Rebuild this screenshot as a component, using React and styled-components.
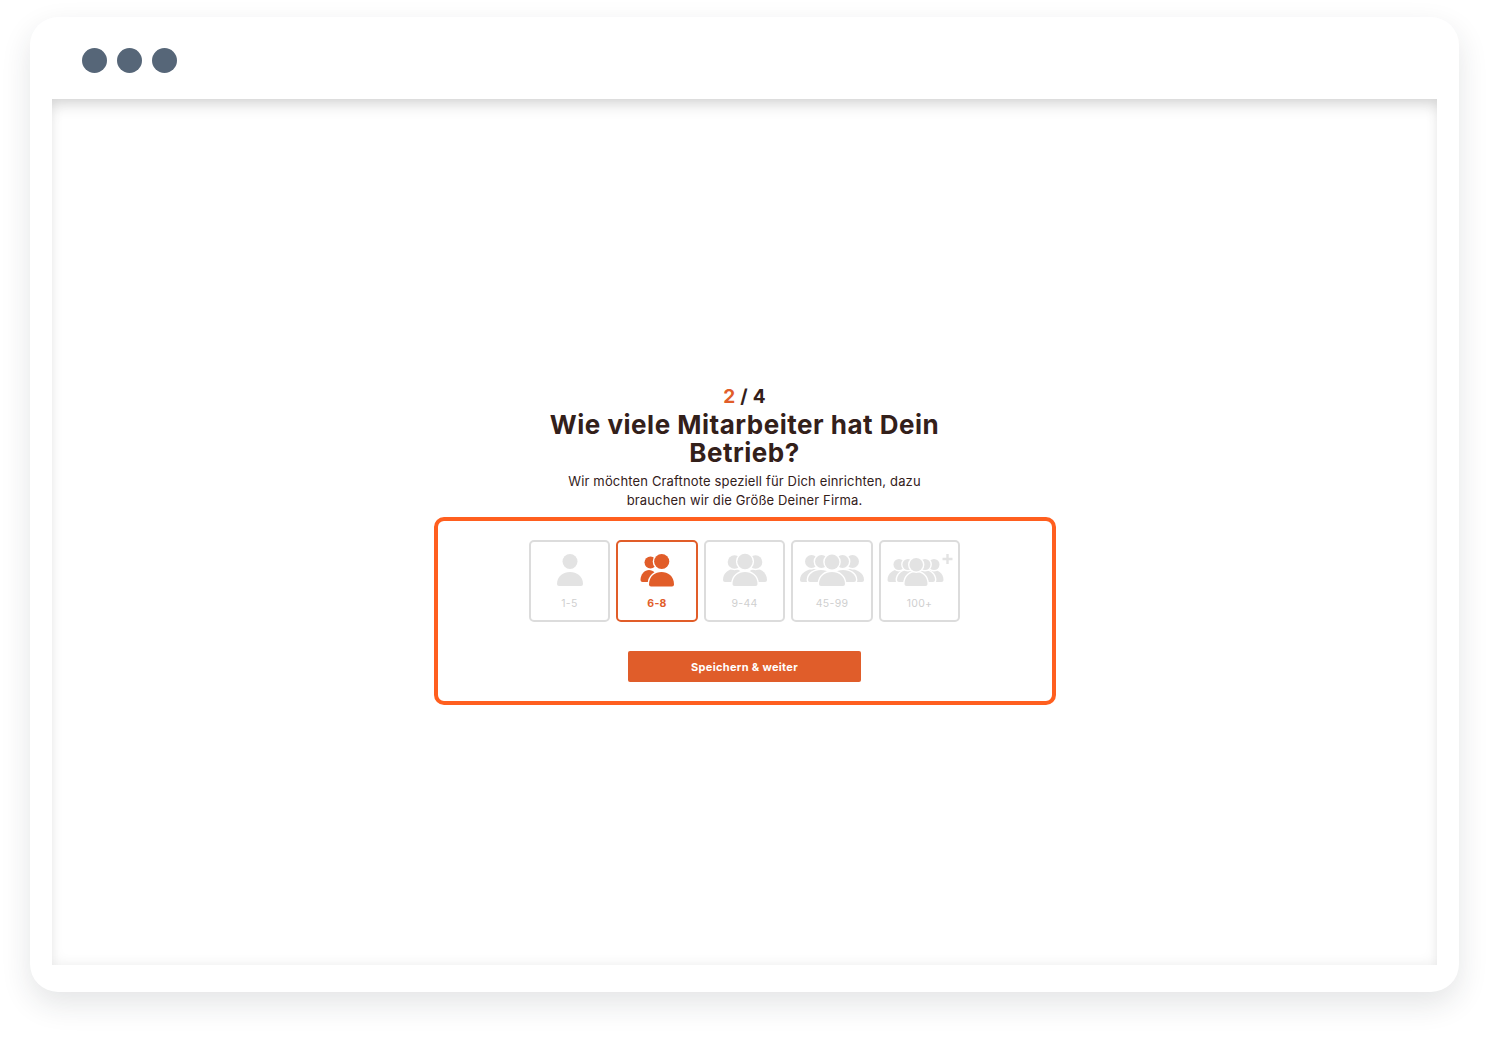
import React from 'react'
import styled, { createGlobalStyle } from 'styled-components'

const Global = createGlobalStyle`
  html, body {
    margin: 0;
    padding: 0;
    background: #fff;
  }
  body {
    font-family: "Inter", "Open Sans", "Liberation Sans", sans-serif;
    overflow: hidden;
  }
`

const Page = styled.div`
  width: 1489px;
  height: 1038px;
  padding: 17px 30px 0;
  box-sizing: border-box;
`

const Window = styled.div`
  width: 1429px;
  height: 975px;
  background: #fff;
  border-radius: 28px;
  box-shadow: 0 12px 30px rgba(30, 40, 50, 0.12);
  padding: 0 22px;
  box-sizing: border-box;
`

const TitleBar = styled.div`
  height: 82px;
  display: flex;
  gap: 10px;
  padding: 31px 0 0 30px;
  box-sizing: border-box;
`

const Dot = styled.span`
  width: 25px;
  height: 25px;
  border-radius: 50%;
  background: #566678;
`

const Screen = styled.div`
  height: 866px;
  box-sizing: border-box;
  padding-top: 288px;
  display: flex;
  flex-direction: column;
  align-items: center;
  background: #fff;
  box-shadow: inset 0 14px 16px -8px rgba(0, 0, 0, 0.13), inset 0 0 13px rgba(0, 0, 0, 0.08);
`

const Step = styled.div`
  font-size: 19px;
  line-height: 20px;
  font-weight: 700;
  letter-spacing: 0.3px;
  color: #33201a;
`

const StepNow = styled.span`
  color: #e15d29;
`

const Title = styled.h1`
  margin: 4px 0 0;
  width: 420px;
  text-align: center;
  font-size: 26px;
  line-height: 28px;
  font-weight: 700;
  letter-spacing: 0.5px;
  color: #33201a;
`

const Intro = styled.p`
  margin: 5px 0 0;
  width: 380px;
  text-align: center;
  font-size: 13px;
  line-height: 19px;
  font-weight: 400;
  letter-spacing: 0.15px;
  color: #33201a;
`

const Highlight = styled.div`
  margin-top: 7px;
  width: 622px;
  height: 188px;
  box-sizing: border-box;
  border: 4px solid #ff5f1f;
  border-radius: 10px;
  padding-top: 19px;
  display: flex;
  flex-direction: column;
  align-items: center;
`

const Options = styled.div`
  display: flex;
  gap: 6px;
`

const Option = styled.div`
  width: 81.5px;
  height: 81.5px;
  box-sizing: border-box;
  border: 2px solid ${p => (p.$active ? '#e15d29' : '#dcdcdc')};
  border-radius: 5px;
  display: flex;
  flex-direction: column;
  align-items: center;
  padding-top: 8px;
`

const OptionIcon = styled.svg`
  width: 70px;
  height: 40px;
  flex: none;
`

const OptionLabel = styled.div`
  margin-top: 7px;
  font-size: 10.5px;
  line-height: 14px;
  font-weight: ${p => (p.$active ? 700 : 400)};
  letter-spacing: 0.3px;
  color: ${p => (p.$active ? '#e15d29' : '#cfcfcf')};
`

const SaveButton = styled.button`
  margin-top: 29.5px;
  width: 233px;
  height: 31px;
  border: none;
  border-radius: 2px;
  background: #e05d2a;
  color: #fff;
  font-family: inherit;
  font-size: 11px;
  font-weight: 700;
  letter-spacing: 0.32px;
`

// dome shaped shoulders, x measured from the centre of the card
const body = (cx, w, top, bottom) => {
  const l = cx - w / 2
  const r = cx + w / 2
  return `M${l} ${bottom - 2} C${l} ${top + 4} ${cx - w / 4} ${top} ${cx} ${top} C${cx + w / 4} ${top} ${r} ${top + 4} ${r} ${bottom - 2} Q${r} ${bottom} ${r - 2} ${bottom} L${l + 2} ${bottom} Q${l} ${bottom} ${l} ${bottom - 2} Z`
}

const Person = ({ x, y, r, bodyX = x, bodyW, top, bottom, color }) => (
  <g fill={color} stroke="#fff" strokeWidth="2.8" paintOrder="stroke">
    <path d={body(bodyX, bodyW, top, bottom)} />
    <circle cx={x} cy={y} r={r} />
  </g>
)

const OPTIONS = [
  {
    label: '1-5',
    people: [{ x: 0, y: 11.5, r: 7.5, bodyW: 26, top: 22, bottom: 36 }],
  },
  {
    label: '6-8',
    active: true,
    people: [
      { x: -6.5, y: 12.5, r: 6, bodyX: -8, bodyW: 17, top: 20, bottom: 32 },
      { x: 4.7, y: 11.5, r: 7.6, bodyX: 4.5, bodyW: 25, top: 22, bottom: 36.5 },
    ],
  },
  {
    label: '9-44',
    people: [
      { x: -10.5, y: 12, r: 6.8, bodyX: -11, bodyW: 22, top: 19, bottom: 32 },
      { x: 10.5, y: 12, r: 6.8, bodyX: 11, bodyW: 22, top: 19, bottom: 32 },
      { x: 0, y: 11.5, r: 7.7, bodyW: 25, top: 22, bottom: 36 },
    ],
  },
  {
    label: '45-99',
    people: [
      { x: -20.5, y: 11.5, r: 6.5, bodyX: -18, bodyW: 28, top: 19, bottom: 32 },
      { x: 20.5, y: 11.5, r: 6.5, bodyX: 18, bodyW: 28, top: 19, bottom: 32 },
      { x: -10.5, y: 11.5, r: 6.5, bodyX: -11, bodyW: 26, top: 20, bottom: 32 },
      { x: 10.5, y: 11.5, r: 6.5, bodyX: 11, bodyW: 26, top: 20, bottom: 32 },
      { x: 0, y: 12, r: 7.4, bodyW: 26, top: 22, bottom: 36 },
    ],
  },
  {
    label: '100+',
    plus: true,
    people: [
      { x: -21, y: 14.5, r: 5.5, bodyX: -20, bodyW: 25, top: 19, bottom: 32 },
      { x: 14, y: 14.5, r: 5.5, bodyX: 11, bodyW: 25, top: 19, bottom: 32 },
      { x: -12, y: 14.5, r: 5.5, bodyX: -12, bodyW: 22, top: 20, bottom: 32 },
      { x: 5, y: 14.5, r: 5.5, bodyX: 4, bodyW: 22, top: 20, bottom: 32 },
      { x: -3.8, y: 14.8, r: 6.8, bodyX: -4, bodyW: 23, top: 22, bottom: 36 },
    ],
  },
]

const App = () => (
  <>
    <Global />
    <Page>
      <Window>
        <TitleBar>
          <Dot />
          <Dot />
          <Dot />
        </TitleBar>
        <Screen>
          <Step>
            <StepNow>2</StepNow> / 4
          </Step>
          <Title>Wie viele Mitarbeiter hat Dein Betrieb?</Title>
          <Intro>Wir möchten Craftnote speziell für Dich einrichten, dazu brauchen wir die Größe Deiner Firma.</Intro>
          <Highlight>
            <Options>
              {OPTIONS.map(o => {
                const color = o.active ? '#e15d29' : '#e3e3e3'
                return (
                  <Option key={o.label} $active={o.active}>
                    <OptionIcon viewBox="-35 0 70 40">
                      {o.people.map((p, i) => (
                        <Person key={i} {...p} color={color} />
                      ))}
                      {o.plus && (
                        <path d="M22.500 9H32.500M27.500 4V14" stroke={color} strokeWidth="2.4" fill="none" />
                      )}
                    </OptionIcon>
                    <OptionLabel $active={o.active}>{o.label}</OptionLabel>
                  </Option>
                )
              })}
            </Options>
            <SaveButton>Speichern &amp; weiter</SaveButton>
          </Highlight>
        </Screen>
      </Window>
    </Page>
  </>
)

export default App
